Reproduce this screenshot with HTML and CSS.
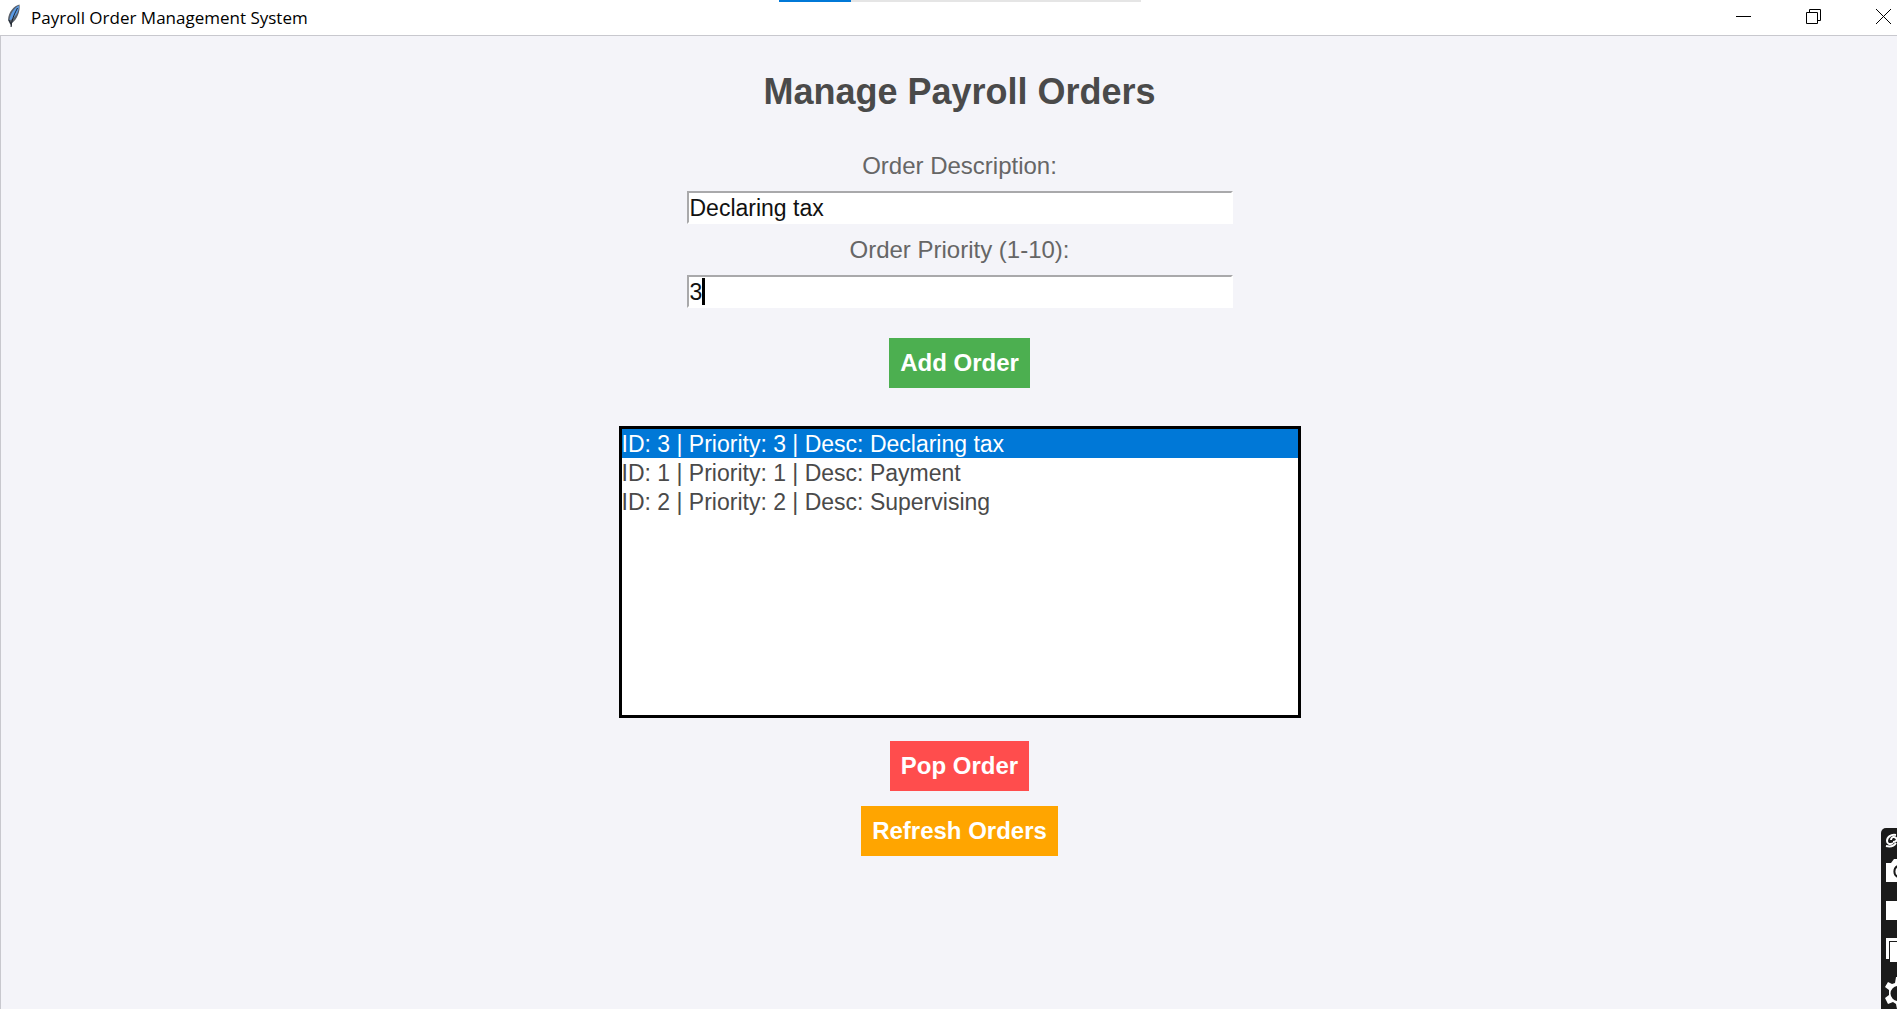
FILE: index.html
```html
<!DOCTYPE html>
<html lang="en">
<head>
<meta charset="utf-8">
<title>Payroll Order Management System</title>
<link rel="stylesheet" href="styles.css">
</head>
<body>
<header class="titlebar">
  <svg class="feather" width="14" height="24" viewBox="0 0 14 24" aria-hidden="true">
    <path d="M12.500 .5C7 1.500 1.500 8 1 16l2 4 1.500 3 .5-4C10 16 13.500 7 12.500.5z" fill="#59606a"/>
    <path d="M12 1.500C7 4 3 10 2.500 16.500 8 14 12 8 12 1.500z" fill="#5b9be6"/>
    <path d="M10.500 4C8 9 5 14 4 23M2 16l2 4" fill="none" stroke="#1b222c"/>
  </svg>
  <span class="title">Payroll Order Management System</span>
  <div class="window-controls">
    <button class="control" type="button" aria-label="Minimize"><svg width="15" height="15" viewBox="0 0 15 15"><path d="M0 7.500h15" stroke="#000"/></svg></button>
    <button class="control" type="button" aria-label="Restore"><svg width="15" height="15" viewBox="0 0 15 15"><path d="M.5 3.500h11v11H.5zM3.500 3.500v-3h11v11h-3" fill="none" stroke="#000"/></svg></button>
    <button class="control" type="button" aria-label="Close"><svg width="15" height="15" viewBox="0 0 15 15"><path d="M0 0l15 15M15 0L0 15" stroke="#000"/></svg></button>
  </div>
  <div class="progress"><div class="progress-value"></div></div>
</header>
<main class="content">
  <h1 class="heading">Manage Payroll Orders</h1>
  <form class="order-form">
    <label class="label" for="description">Order Description:</label>
    <input class="entry" id="description" type="text" value="Declaring tax">
    <label class="label" for="priority">Order Priority (1-10):</label>
    <div class="entry-wrap">
      <input class="entry" id="priority" type="text" value="3">
      <span class="caret"></span>
    </div>
    <button class="button add" type="button">Add Order</button>
  </form>
  <select class="orders" size="10" aria-label="Orders">
    <option selected>ID: 3 | Priority: 3 | Desc: Declaring tax</option>
    <option>ID: 1 | Priority: 1 | Desc: Payment</option>
    <option>ID: 2 | Priority: 2 | Desc: Supervising</option>
  </select>
  <div class="actions">
    <button class="button pop" type="button">Pop Order</button>
    <button class="button refresh" type="button">Refresh Orders</button>
  </div>
</main>
<aside class="recorder" aria-label="Capture tools">
  <svg width="16" height="181" viewBox="0 0 16 181">
    <path d="M15 7c-5-1-9 2-9 6 0 3 3 4 6 2" fill="none" stroke="#fff" stroke-width="2"/>
    <path d="M5 18c4 1 8 0 10-3M10 12c0-3 3-4 5-2s0 4-3 4" fill="none" stroke="#fff" stroke-width="2"/>
    <path d="M5 35h5l3-4h3v23H5z" fill="#fff"/>
    <path d="M17 38a6 6 0 0 0 0 11" fill="none" stroke="#1b1b1b" stroke-width="2"/>
    <path d="M5 73h11v19H5zM5 110h11v3H8v18H5z" fill="#fff"/>
    <path d="M9 114h7v20H9z" fill="#fff"/>
    <path d="M16 149h-1l-1 6-3 1-4-2-3 5 4 3v5l-4 3 3 6 5-2 3 2 1 5h1v-8a7 7 0 0 1 0-15z" fill="#fff"/>
  </svg>
</aside>
</body>
</html>
```
FILE: styles.css
```css
* { box-sizing: border-box; }

body {
  display: flex;
  flex-direction: column;
  min-height: 100vh;
  margin: 0;
  background: #f4f4f9;
  font-family: "Liberation Sans", Arial, sans-serif;
}

.titlebar {
  position: relative;
  display: flex;
  align-items: center;
  gap: 10px;
  height: 36px;
  padding-left: 7px;
  border-bottom: 1px solid #c8c8ce;
  background: #fff;
}

.feather { margin-bottom: 4px; }

.title {
  color: #000;
  font: 17px/24px "Open Sans", "Noto Sans", sans-serif;
}

.window-controls {
  display: flex;
  gap: 55px;
  margin-left: auto;
  padding: 0 6px 2px 0;
}

.control {
  display: flex;
  padding: 0;
  border: 0;
  background: none;
}

.progress {
  position: absolute;
  top: 0;
  left: 779px;
  width: 362px;
  height: 2px;
  background: #e5e5e5;
}

.progress-value {
  width: 20%;
  height: 100%;
  background: #0078d7;
}

.content {
  display: flex;
  flex: 1;
  flex-direction: column;
  align-items: center;
  padding: 36px 0 40px 21px;
  border-left: 1px solid #c8c8ce;
}

.heading {
  margin: 0 0 40px;
  color: #4a4a4a;
  font-size: 36px;
  line-height: 40px;
}

.order-form {
  display: flex;
  flex-direction: column;
  align-items: center;
}

.label {
  margin-bottom: 11px;
  color: #666;
  font-size: 24px;
  line-height: 28px;
}

.entry {
  display: block;
  width: 546px;
  height: 33px;
  margin-bottom: 12px;
  padding: 2px 0 0 1px;
  border: 2px solid;
  border-color: #a9a9ab #fff #fff #a9a9ab;
  outline: 0;
  background: #fff;
  color: #111;
  font: 23px/27px "Liberation Sans", Arial, sans-serif;
}

.entry-wrap { position: relative; }

.caret {
  position: absolute;
  top: 3px;
  left: 15px;
  width: 3px;
  height: 27px;
  background: #000;
}

.button {
  height: 50px;
  padding: 0 11px;
  border: 0;
  color: #fff;
  font: bold 24px/28px "Liberation Sans", Arial, sans-serif;
}

.add { margin-top: 18px; background: #4caf50; }
.pop { background: #ff4d4d; }
.refresh { background: #ffa500; }

.orders {
  width: 682px;
  height: 292px;
  margin: 38px 0 23px;
  padding: 0;
  overflow: hidden;
  border: 3px solid #000;
  border-radius: 0;
  outline: 0;
  background: #fff;
  color: #4a4a4a;
  font: 23px/27px "Liberation Sans", Arial, sans-serif;
}

.orders option {
  height: 29px;
  min-height: 29px;
  padding: 2px 0 0;
  line-height: 27px;
}

.orders option:checked {
  background: #0078d7 linear-gradient(#0078d7, #0078d7);
  color: #fff;
}

.actions {
  display: flex;
  flex-direction: column;
  align-items: center;
  gap: 15px;
}

.recorder {
  position: fixed;
  right: 0;
  bottom: 0;
  overflow: hidden;
  border-top-left-radius: 5px;
  background: #1b1b1b;
}

.recorder svg { display: block; }
```
